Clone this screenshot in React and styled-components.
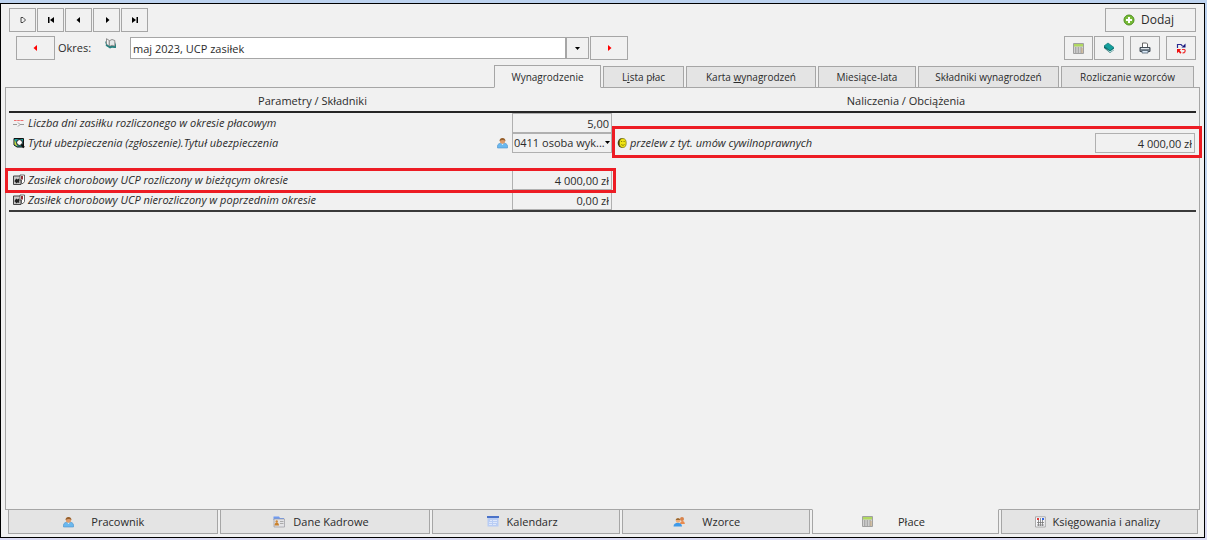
import React from "react";
import styled, { createGlobalStyle } from "styled-components";

const GlobalStyle = createGlobalStyle`
  * { box-sizing: border-box; }
  body {
    margin: 0;
    background: #bdd3f0;
    color: #2b2b2b;
    font-family: "Open Sans", "Noto Sans", sans-serif;
    font-size: 11px;
    line-height: 16px;
  }
  button, input, select { font: inherit; color: inherit; }
`;

const Desktop = styled.div`
  display: flex;
  min-height: 100vh;
  padding: 3px 2px 2px 0;
  background: linear-gradient(#bdd3f0, #c6d9f1 50%, #dcdcf4);
`;

const Window = styled.main`
  display: flex;
  flex: 1;
  flex-direction: column;
  min-width: 0;
  padding: 4px 4px 3px 4px;
  border: 1px solid #000;
  background: #f1f1f1;
`;

const Toolbar = styled.div`
  display: flex;
  align-items: center;
  justify-content: space-between;
  height: 24px;
  margin-bottom: 4px;
  padding: 0 4px;
`;

const Group = styled.div`
  display: flex;
  align-items: center;
  gap: ${(p) => p.$gap || 0}px;
  padding-left: ${(p) => p.$indent || 0}px;
`;

const ToolButton = styled.button`
  display: flex;
  align-items: center;
  justify-content: center;
  gap: 6px;
  width: ${(p) => p.$width}px;
  height: 24px;
  padding: 0;
  border: 1px solid #a6a6a6;
  background: #f1f1f1;
  svg { display: block; }
`;

const AddButton = styled(ToolButton)`
  padding-right: 4px;
  font-size: 12px;
`;

const PeriodLabel = styled.label`
  display: flex;
  gap: 14px;
  width: 75px;
  padding-left: 3px;
  line-height: 20px;
  svg { display: block; }
`;

const PeriodInput = styled.input`
  width: 436px;
  height: 22px;
  padding: 0 2px;
  border: 1px solid #a6a6a6;
  background: #fff;
`;

const DropButton = styled(ToolButton)`
  height: 22px;
  margin: 0 1px 0 0;
`;

const TopTabs = styled.div`
  display: flex;
  align-items: flex-end;
  justify-content: flex-end;
  gap: 2px;
  height: 23px;
  padding-right: 6px;
`;

const TopTab = styled.button`
  position: relative;
  z-index: ${(p) => (p.$active ? 1 : 0)};
  width: ${(p) => p.$width}px;
  height: ${(p) => (p.$active ? 23 : 22)}px;
  margin-bottom: -1px;
  padding: 0;
  border: 1px solid #a6a6a6;
  border-bottom-color: ${(p) => (p.$active ? "#f1f1f1" : "#a6a6a6")};
  background: ${(p) => (p.$active ? "#f1f1f1" : "#e4e4e4")};
  font-size: 10px;
  white-space: nowrap;
`;

const Panel = styled.section`
  display: flex;
  flex: 1;
  flex-direction: column;
  padding: 0 3px;
  border: 1px solid #a6a6a6;
`;

const Headings = styled.div`
  display: grid;
  grid-template-columns: 603fr 584fr;
  height: 25px;
  border-bottom: 2px solid #262626;
`;

const Heading = styled.h2`
  margin: 0;
  padding: 5px 0 0 4px;
  font-size: 11px;
  font-weight: 400;
  text-align: center;
`;

const Columns = styled.div`
  display: grid;
  grid-template-columns: 603fr 584fr;
  border-bottom: 2px solid #3a3a3a;
`;

const Column = styled.div`
  display: flex;
  flex-direction: column;
  padding: ${(p) => (p.$offset ? "20px 1px 0" : 0)};
`;

const Row = styled.div`
  position: relative;
  display: flex;
  align-items: center;
  height: 20px;
  margin-top: ${(p) => (p.$spaced ? 17 : 0)}px;
  padding-left: 4px;
  svg { display: block; flex: none; }
`;

const Mark = styled.div`
  position: absolute;
  z-index: 1;
  inset: ${(p) => p.$inset};
  border: 3px solid #ed1c24;
  pointer-events: none;
`;

const RowLabel = styled.label`
  flex: 1;
  padding-left: 3px;
  font-style: italic;
  white-space: nowrap;
`;

const Value = styled.input`
  width: 100px;
  height: 20px;
  padding: 0 2px;
  border: 1px solid #b0b0b0;
  background: #f1f1f1;
  text-align: right;
`;

const Picker = styled.div`
  position: relative;
  width: 100px;
  margin-left: 4px;
  svg { position: absolute; right: 2px; top: 8px; pointer-events: none; }
`;

const Select = styled.select`
  display: block;
  width: 100%;
  height: 20px;
  padding: 0 6px 0 1px;
  border: 1px solid #b0b0b0;
  border-radius: 0;
  background: #f1f1f1;
  appearance: none;
`;

const BottomTabs = styled.nav`
  display: grid;
  grid-template-columns: 210fr 211fr 188fr 188fr 188fr 197fr;
  gap: 2px;
  margin-top: -1px;
  padding: 0 2px 0 3px;
`;

const BottomTab = styled.button`
  display: flex;
  align-items: center;
  justify-content: center;
  gap: ${(p) => p.$gap}px;
  min-width: 0;
  height: 25px;
  padding: 0 ${(p) => p.$inset}px 0 0;
  border: 1px solid #a6a6a6;
  border-top-color: ${(p) => (p.$active ? "#f1f1f1" : "#a6a6a6")};
  background: ${(p) => (p.$active ? "#f1f1f1" : "#e4e4e4")};
  white-space: nowrap;
  svg { display: block; }
`;

const Arrow = ({ dir = "right", bar, color = "#000" }) => (
  <svg width="10" height="8" viewBox="0 0 10 8" fill={color} aria-hidden="true">
    <g transform={dir === "left" ? "matrix(-1 0 0 1 10 0)" : undefined}>
      <path d={bar ? "M2 1l4 3-4 3z" : "M4 1l3.500 3L4 7z"} />
      {bar && <path d="M6.500 1H8v6H6.500z" />}
    </g>
  </svg>
);

const Down = () => (
  <svg width="5" height="3" viewBox="0 0 5 3" aria-hidden="true">
    <path d="M0 0h5L2.500 3z" fill="#000" />
  </svg>
);

const FirstMark = () => (
  <svg width="8" height="8" viewBox="0 0 8 8" aria-hidden="true">
    <path d="M2 1.500h2L6.500 4 4 6.500H2z" fill="none" stroke="#444" />
  </svg>
);

const OpenBook = () => (
  <svg width="11" height="11" viewBox="0 0 11 11" aria-hidden="true">
    <path d="M0 3l1 4 4 3.500 2-1 4 .5V4L9.500 8.500 5 8z" fill="#27807e" />
    <path d="M1.500 .7L4.300 2.500v6L1.500 6.200z" fill="#f4f4f4" stroke="#777" strokeWidth=".8" />
    <path d="M4.300 2.800L7 1.500l2.800 1v5.700L7 7.200 4.300 8.600z" fill="#e6e9e9" stroke="#777" strokeWidth=".8" />
    <path d="M1 7l4 2.500 2-1 3.500 .8" fill="none" stroke="#27807e" strokeWidth="1.500" />
  </svg>
);

const Plus = () => (
  <svg width="12" height="12" viewBox="0 0 12 12" aria-hidden="true">
    <circle cx="6" cy="6" r="5" fill="#78bb38" stroke="#4f9020" />
    <path d="M6 3v6M3 6h6" stroke="#fff" strokeWidth="2" />
  </svg>
);

const Calculator = () => (
  <svg width="11" height="11" viewBox="0 0 11 11" aria-hidden="true">
    <path d="M.5 .5h10v10H.5z" fill="#d2d2d2" stroke="#a0a0a0" />
    <path d="M1 1h9v2.500H1z" fill="#b0d860" />
    <path d="M2 5h7M2 7h7M2 9h7" stroke="#808080" strokeDasharray="1.400 1.300" />
    <path d="M9 5v5" stroke="#d0ae7c" />
  </svg>
);

const ClosedBook = () => (
  <svg width="12" height="12" viewBox="0 0 12 12" aria-hidden="true">
    <path d="M1 4v2l6 5 4-3V6z" fill="#0b6464" />
    <path d="M2 6l5 3.500L11 6.500v1.300L7 10.500z" fill="#e2f3f3" />
    <path d="M1 4l4-3 6 4.500L7 8.800z" fill="#159f9c" stroke="#0d7776" strokeWidth=".7" />
  </svg>
);

const Printer = () => (
  <svg width="12" height="12" viewBox="0 0 12 12" aria-hidden="true">
    <path d="M3.500 5V1h4l1 1v3" fill="#fff" stroke="#666" />
    <path d="M1 5.500h10v4H1z" fill="#7c8792" stroke="#434d57" />
    <path d="M2 6.500h8" stroke="#dfe4e8" />
    <path d="M3 8.500h6V11H3z" fill="#d9e8f7" stroke="#4f5f6f" strokeWidth=".8" />
  </svg>
);

const Refresh = () => (
  <svg width="11" height="11" viewBox="0 0 11 11" fill="none" aria-hidden="true">
    <path d="M1.500 5V1.500H5L6.500 3" stroke="#2a2a90" strokeWidth="1.200" />
    <path d="M9.500 .5v4h-4z" fill="#15157c" />
    <path d="M6 6.500h2.500c1.500 1 .5 3.500-2 3.300" stroke="#e33" strokeWidth="1.200" />
    <path d="M1 6h4L3.700 7.500 5.500 9.500 4.300 10.700 2.600 8.800 1 10.300z" fill="#f01010" />
  </svg>
);

const Slider = () => (
  <svg width="12" height="12" viewBox="0 0 12 12" aria-hidden="true">
    <path d="M1 3.500h10" stroke="#f07070" strokeDasharray="2.600 .6" />
    <path d="M0 7.500h4M5 5.500l2 2-2 2M7 7.500h4" stroke="#999" fill="none" />
  </svg>
);

const Magnifier = () => (
  <svg width="12" height="12" viewBox="0 0 12 12" aria-hidden="true">
    <path d="M1 1.500h9.500v8.500H4L1 8z" fill="#18a3a0" stroke="#111" />
    <path d="M1.500 2.500v5l3 2z" fill="#d6d632" />
    <circle cx="6.500" cy="5.500" r="2.900" fill="#fff" stroke="#111" />
    <path d="M8.500 7.500l2.500 3" stroke="#111" strokeWidth="2" />
  </svg>
);

const Puzzle = () => (
  <svg width="12" height="12" viewBox="0 0 12 12" aria-hidden="true">
    <path d="M.5 2h7.500v8.500H.5z" fill="#c8c8c8" stroke="#444" />
    <path d="M2 6l1.500-1.500 1 1L6 4.500l.5 2L6 8l.5 1-2-.5L3 9.500 2.500 8l-1-.5z" fill="#222" />
    <path d="M7 1h4.500v6.500L10 9.500H8.500V6H7z" fill="#fff" stroke="#444" strokeWidth=".8" />
    <path d="M8 2h2v3.500H8z" fill="#933238" />
  </svg>
);

const Coin = () => (
  <svg width="10" height="12" viewBox="0 0 10 12" aria-hidden="true">
    <ellipse cx="4.500" cy="6" rx="3.800" ry="4.700" fill="#3d3d12" />
    <ellipse cx="5.800" cy="6" rx="3.400" ry="4.500" fill="#f0e414" stroke="#77700d" strokeWidth=".7" />
    <path d="M4 4.500h1.200M6.500 4.500h1.200M4.300 7.500c1 1 2.200 1 3.200 0" stroke="#8a8300" fill="none" />
  </svg>
);

const Person = () => (
  <svg width="11" height="12" viewBox="0 0 11 12" aria-hidden="true">
    <path d="M.5 11V9c0-2 2-3 5-3s5 1 5 3v2z" fill="#6bb8ee" stroke="#4a92cc" strokeWidth=".6" />
    <path d="M4.300 6.500h2.400L5.500 8z" fill="#fff" />
    <circle cx="5.500" cy="4" r="2.700" fill="#dd9c6c" />
    <path d="M2.500 4C2.500 0 8.500 0 8.500 4 6.500 2.500 5 2.500 2.500 4z" fill="#96602d" />
  </svg>
);

const People = () => (
  <svg width="12" height="12" viewBox="0 0 12 12" aria-hidden="true">
    <circle cx="9" cy="3" r="2" fill="#d9824a" />
    <path d="M7 8c0-4 5-4 4.800 0z" fill="#e98b4e" />
    <path d="M.5 10.500C.5 5.500 9 5.500 9 10.500z" fill="#3f9ae8" />
    <circle cx="5" cy="4.500" r="2.300" fill="#eeae76" />
    <path d="M2.700 4C3 1.500 7 1.500 7.300 4z" fill="#9a6932" />
  </svg>
);

const Folder = () => (
  <svg width="12" height="12" viewBox="0 0 12 12" aria-hidden="true">
    <path d="M.5 4V.5h5.500L7 2h4v3z" fill="#6f9af0" />
    <path d="M1 3h10.500v8H1z" fill="#e3e3e6" stroke="#9a9aa0" strokeWidth=".7" />
    <circle cx="3.700" cy="5.500" r="1.200" fill="#d08a3a" />
    <path d="M1.500 9.500c0-4 4.500-4 4.500 0z" fill="#c9812c" />
    <path d="M7 5.500h3.500M7 7.500h3.500" stroke="#aaa" />
  </svg>
);

const CalendarIcon = () => (
  <svg width="12" height="12" viewBox="0 0 12 12" aria-hidden="true">
    <path d="M.5 1h11v9.500H.5z" fill="#b9cdf4" />
    <path d="M0 0h12v2H0z" fill="#4a72c8" />
    <path d="M3 4.500h2M6 4.500h4M2 6.500h3M6 6.500h4M2 8.500h3M6 8.500h3" stroke="#dfe8fb" />
  </svg>
);

const Ledger = () => (
  <svg width="11" height="12" viewBox="0 0 11 12" aria-hidden="true">
    <path d="M.5 .8h9.800v10.200H.5z" fill="#f7f7fa" stroke="#999" strokeWidth=".8" />
    <path d="M2 6.500h7M2 9h7M3.500 4v6M5.500 2v8M7.500 4v6" stroke="#777" strokeWidth=".8" />
    <path d="M2 2h2v2H2z" fill="#e03c3c" />
    <path d="M7 2h2v2H7z" fill="#3566dd" />
  </svg>
);

const navButtons = [
  { name: "Pozycja", icon: <FirstMark /> },
  { name: "Pierwszy", icon: <Arrow dir="left" bar /> },
  { name: "Poprzedni", icon: <Arrow dir="left" /> },
  { name: "Następny", icon: <Arrow /> },
  { name: "Ostatni", icon: <Arrow bar /> },
];

const topTabs = [
  { label: "Wynagrodzenie", width: 107, active: true },
  { label: <>L<u>i</u>sta płac</>, width: 81 },
  { label: <>Karta <u>w</u>ynagrodzeń</>, width: 130 },
  { label: "Miesiące-lata", width: 98 },
  { label: "Składniki wynagrodzeń", width: 141 },
  { label: "Rozliczanie wzorców", width: 133 },
];

const bottomTabs = [
  { label: "Pracownik", icon: <Person />, gap: 17, inset: 18 },
  { label: "Dane Kadrowe", icon: <Folder />, gap: 8, inset: 8 },
  { label: "Kalendarz", icon: <CalendarIcon />, gap: 8, inset: 8 },
  { label: "Wzorce", icon: <People />, gap: 17, inset: 18 },
  { label: "Płace", icon: <Calculator />, gap: 25, inset: 24, active: true },
  { label: "Księgowania i analizy", icon: <Ledger />, gap: 6, inset: 4 },
];

const Field = ({ id, icon, label, value, spaced, mark }) => (
  <Row $spaced={spaced}>
    {icon}
    <RowLabel htmlFor={id}>{label}</RowLabel>
    <Value id={id} defaultValue={value} />
    {mark && <Mark $inset={mark} />}
  </Row>
);

export default function App() {
  return (
    <>
      <GlobalStyle />
      <Desktop>
        <Window>
          <Toolbar>
            <Group $gap={1}>
              {navButtons.map((b) => (
                <ToolButton key={b.name} $width={27} aria-label={b.name}>{b.icon}</ToolButton>
              ))}
            </Group>
            <AddButton $width={91}><Plus />Dodaj</AddButton>
          </Toolbar>
          <Toolbar>
            <Group $indent={7}>
              <ToolButton $width={39} aria-label="Poprzedni okres"><Arrow dir="left" color="#f00" /></ToolButton>
              <PeriodLabel htmlFor="okres">Okres:<OpenBook /></PeriodLabel>
              <PeriodInput id="okres" defaultValue="maj 2023, UCP zasiłek" />
              <DropButton $width={23} aria-label="Rozwiń listę"><Down /></DropButton>
              <ToolButton $width={38} aria-label="Następny okres"><Arrow color="#f00" /></ToolButton>
            </Group>
            <Group $gap={6}>
              <Group $gap={1}>
                <ToolButton $width={29} aria-label="Kalkulator"><Calculator /></ToolButton>
                <ToolButton $width={30} aria-label="Księga"><ClosedBook /></ToolButton>
              </Group>
              <ToolButton $width={30} aria-label="Drukuj"><Printer /></ToolButton>
              <ToolButton $width={30} aria-label="Odśwież"><Refresh /></ToolButton>
            </Group>
          </Toolbar>
          <TopTabs role="tablist">
            {topTabs.map((t) => (
              <TopTab key={t.width} role="tab" aria-selected={!!t.active} $width={t.width} $active={t.active}>
                {t.label}
              </TopTab>
            ))}
          </TopTabs>
          <Panel>
            <Headings>
              <Heading>Parametry / Składniki</Heading>
              <Heading>Naliczenia / Obciążenia</Heading>
            </Headings>
            <Columns>
              <Column>
                <Field id="dni" icon={<Slider />} label="Liczba dni zasiłku rozliczonego w okresie płacowym" value="5,00" />
                <Row>
                  <Magnifier />
                  <RowLabel htmlFor="tytul">Tytuł ubezpieczenia (zgłoszenie).Tytuł ubezpieczenia</RowLabel>
                  <Person />
                  <Picker>
                    <Select id="tytul"><option>0411 osoba wyk...</option></Select>
                    <Down />
                  </Picker>
                </Row>
                <Field id="rozliczony" icon={<Puzzle />} label="Zasiłek chorobowy UCP rozliczony w bieżącym okresie" value="4 000,00 zł" spaced mark="-2px -4px -3px" />
                <Field id="nierozliczony" icon={<Puzzle />} label="Zasiłek chorobowy UCP nierozliczony w poprzednim okresie" value="0,00 zł" />
              </Column>
              <Column $offset>
                <Field id="przelew" icon={<Coin />} label="przelew z tyt. umów cywilnoprawnych" value="4 000,00 zł" mark="-7px -7px -5px -1px" />
              </Column>
            </Columns>
          </Panel>
          <BottomTabs>
            {bottomTabs.map((t) => (
              <BottomTab key={t.label} $gap={t.gap} $inset={t.inset} $active={t.active}>
                {t.icon}{t.label}
              </BottomTab>
            ))}
          </BottomTabs>
        </Window>
      </Desktop>
    </>
  );
}
